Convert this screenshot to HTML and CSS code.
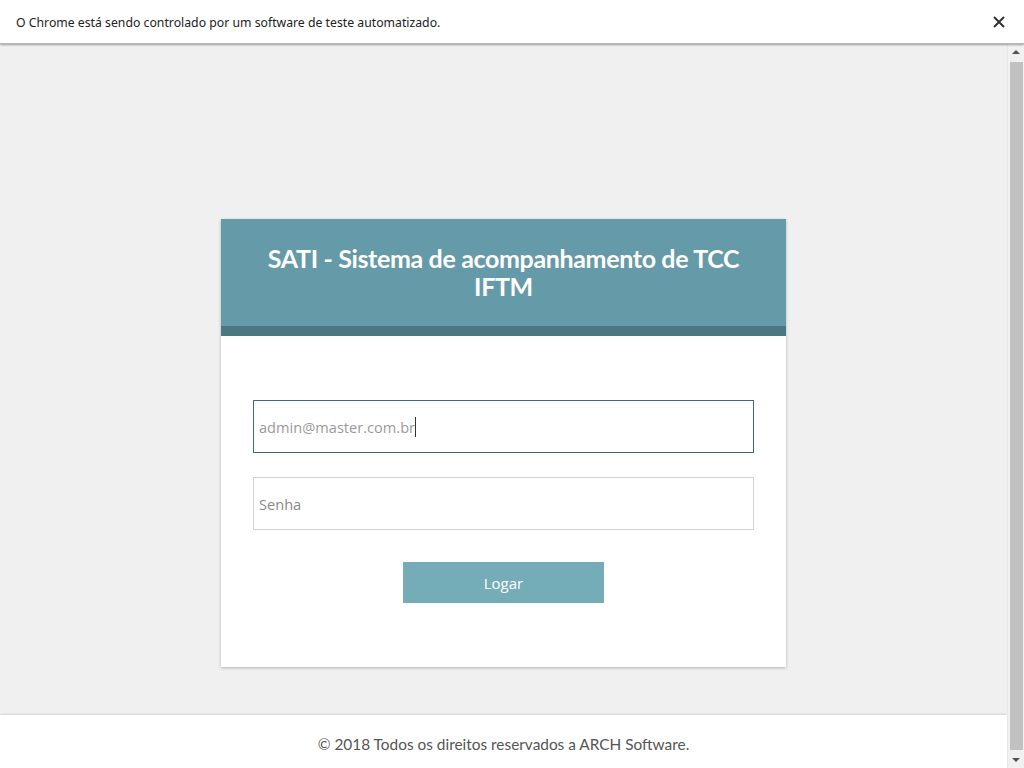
FILE: index.html
```html
<!DOCTYPE html>
<html lang="pt-BR">
<head>
<meta charset="utf-8">
<title>SATI</title>
<link rel="stylesheet" href="styles.css">
</head>
<body>
<div class="infobar">
  <span class="info-text">O Chrome está sendo controlado por um software de teste automatizado.</span>
  <svg class="close" width="12" height="12" viewBox="0 0 12 12"><path d="M1 1L11 11M11 1L1 11" stroke="#333" stroke-width="2"/></svg>
</div>
<div class="viewport">
  <div class="page">
    <main class="main">
      <div class="card">
        <div class="card-head">
          <h1>SATI - Sistema de acompanhamento de TCC<br>IFTM</h1>
        </div>
        <div class="card-strip"></div>
        <form class="card-body">
          <div class="field focus"><span class="val">admin@master.com.br</span><span class="caret"></span></div>
          <div class="field"><span class="ph">Senha</span></div>
          <button type="button" class="btn">Logar</button>
        </form>
      </div>
    </main>
    <footer class="footer">© 2018 Todos os direitos reservados a ARCH Software.</footer>
  </div>
  <div class="scrollbar">
    <div class="arrow up"></div>
    <div class="thumb"></div>
    <div class="arrow down"></div>
  </div>
</div>
</body>
</html>
```
FILE: styles.css
```css
* { box-sizing: border-box; }
html, body { margin: 0; padding: 0; height: 100%; }
body {
  width: 1024px;
  height: 768px;
  overflow: hidden;
  display: flex;
  flex-direction: column;
  background: #f0f0f0;
  font-family: "Open Sans", "Liberation Sans", sans-serif;
}
.infobar {
  height: 44px;
  flex: none;
  background: #fff;
  display: flex;
  align-items: center;
  justify-content: space-between;
  padding: 0 19px 0 16px;
  box-shadow: 0 1px 2px rgba(0,0,0,0.35);
  border-bottom: 1px solid #b8b8b8;
  position: relative;
  z-index: 2;
}
.info-text {
  font-size: 12.25px;
  color: #222;
  font-family: "Noto Sans", "Open Sans", sans-serif;
  margin-top: 2px;
}
.close { display: block; margin-top: 1px; }
.viewport {
  flex: 1;
  display: flex;
  min-height: 0;
}
.page {
  flex: 1;
  display: flex;
  flex-direction: column;
}
.main {
  flex: 1;
  display: flex;
  justify-content: center;
  padding-top: 175px;
}
.card {
  width: 565px;
  height: 448px;
  background: #fff;
  box-shadow: 0 1px 3px rgba(0,0,0,0.25);
  display: flex;
  flex-direction: column;
}
.card-head {
  height: 107px;
  background: #659aa8;
  display: flex;
  align-items: center;
  justify-content: center;
  padding-bottom: 2px;
}
.card-head h1 {
  margin: 0;
  color: #fff;
  font-family: "Lato", "Noto Sans", sans-serif;
  font-weight: 700;
  font-size: 25px;
  line-height: 28px;
  text-align: center;
  letter-spacing: -0.35px;
}
.card-strip { height: 10px; background: #4a7882; }
.card-body {
  padding: 64px 32px 0 32px;
  display: flex;
  flex-direction: column;
  align-items: center;
  margin: 0;
}
.field {
  width: 501px;
  height: 53px;
  border: 1px solid #d2d2d2;
  display: flex;
  align-items: center;
  padding-left: 5px;
  font-size: 14.6px;
  margin-bottom: 24px;
}
.field.focus { border-color: #3d6a8a; }
.val { color: #9a9a9a; }
.ph { color: #8a8a8a; }
.caret { width: 1px; height: 20px; background: #333; margin-left: 0; }
.btn {
  width: 201px;
  height: 41px;
  margin-top: 8px;
  border: 0;
  background: #74adb7;
  color: #fff;
  font-family: "Open Sans", sans-serif;
  font-size: 15px;
  padding: 0;
}
.footer {
  height: 53px;
  flex: none;
  background: #fff;
  box-shadow: 0 -1px 2px rgba(0,0,0,0.12);
  text-align: center;
  font-family: "Lato", "Noto Sans", sans-serif;
  font-size: 15.4px;
  color: #555;
  padding-top: 20px;
}
.scrollbar {
  width: 17px;
  flex: none;
  background: #f1f1f1;
  display: flex;
  flex-direction: column;
  align-items: center;
  border-left: 1px solid #e8e8e8;
}
.arrow {
  height: 17px;
  width: 100%;
  position: relative;
}
.arrow::after {
  content: "";
  position: absolute;
  left: 4px;
  width: 0; height: 0;
  border-left: 4px solid transparent;
  border-right: 4px solid transparent;
}
.arrow.up::after { top: 6px; border-bottom: 4px solid #505050; }
.arrow.down::after { top: 7px; border-top: 4px solid #505050; }
.thumb {
  flex: 1;
  width: 13px;
  background: #c1c1c1;
  margin-top: 1px;
  margin-bottom: 1px;
}
```
